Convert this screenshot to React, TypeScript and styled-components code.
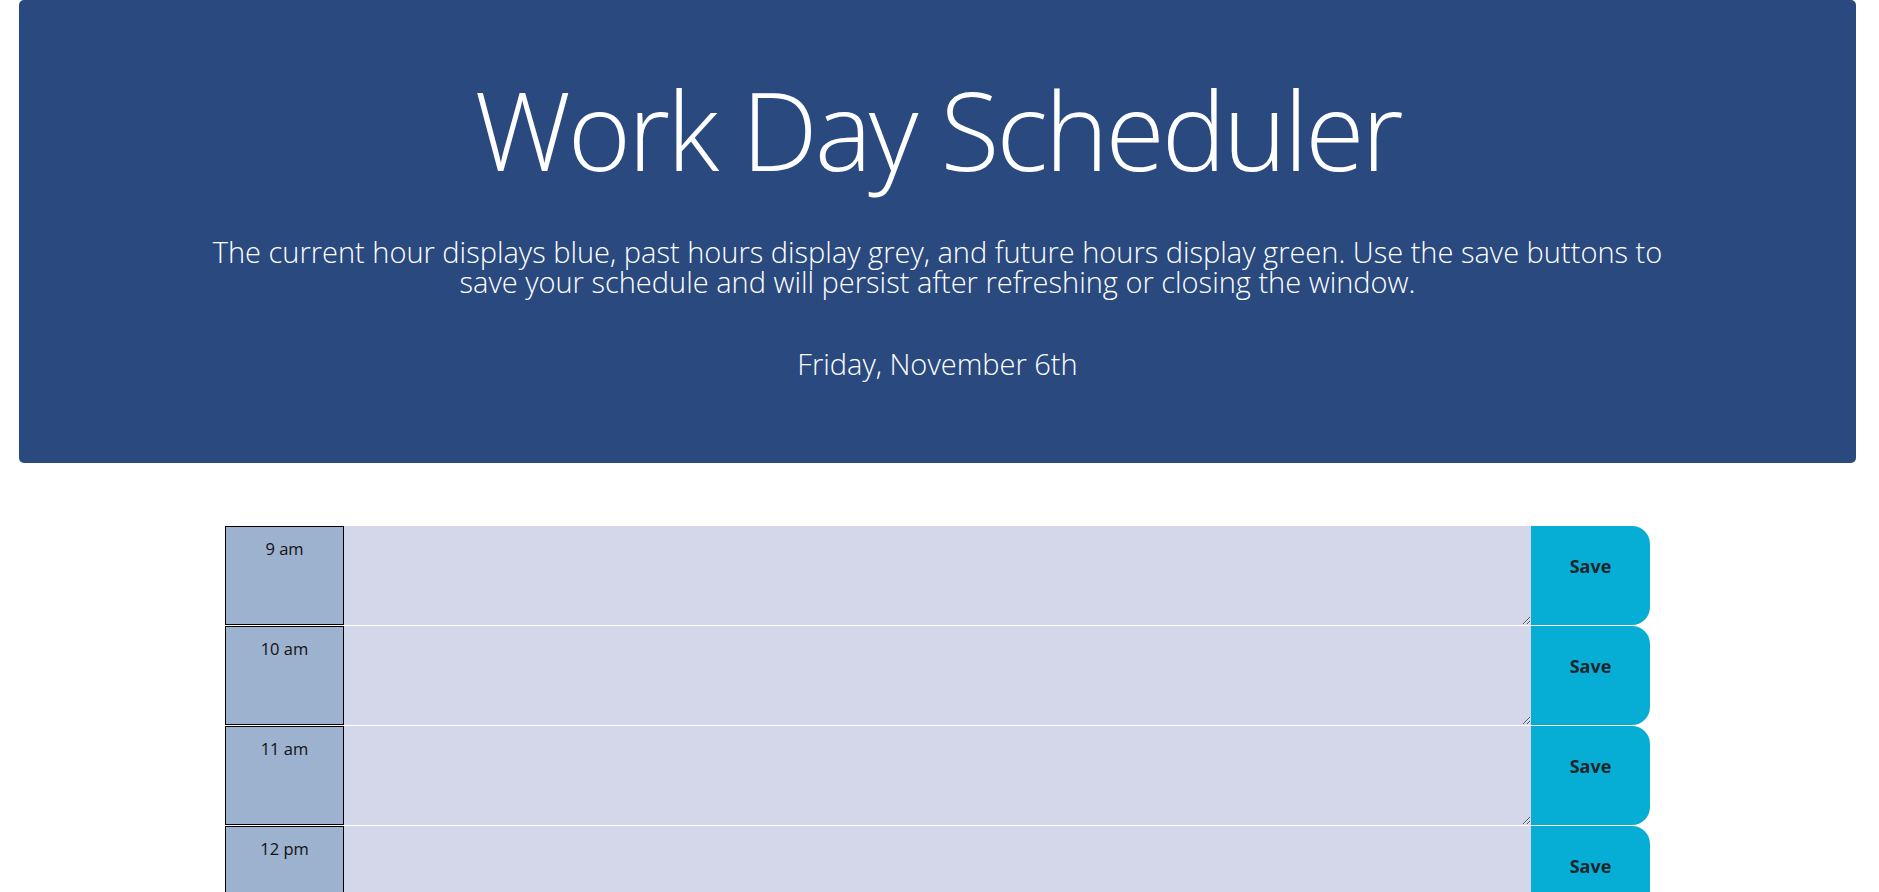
import React from "react";
import styled, { createGlobalStyle } from "styled-components";

const GlobalStyle = createGlobalStyle`
  html { scrollbar-width: none; }
  html::-webkit-scrollbar { display: none; }
  * { box-sizing: border-box; }
  body {
    margin: 0;
    background: #ffffff;
    color: #212529;
    font-family: "Open Sans", "Noto Sans", "Liberation Sans", sans-serif;
  }
`;

const Page = styled.div`
  padding: 0 23px 40px 19px;
`;

const Header = styled.header`
  display: flex;
  flex-direction: column;
  align-items: center;
  height: 463px;
  padding-top: 65px;
  background: #2a4a7f;
  color: #ffffff;
  border-radius: 5px;
  text-align: center;
`;

const Title = styled.h1`
  margin: 0;
  font-size: 108px;
  font-weight: 300;
  line-height: 130px;
  letter-spacing: -3px;
`;

const Lead = styled.p`
  margin: 42px 0 0;
  font-size: 29px;
  font-weight: 300;
  line-height: 30px;
  white-space: nowrap;
`;

const Today = styled.p`
  margin: 52px 0 0;
  font-size: 29px;
  font-weight: 300;
  line-height: 30px;
`;

const Schedule = styled.main`
  width: 1425px;
  margin: 63px auto 0;
`;

const Row = styled.div`
  display: flex;
  height: 100px;
  border-bottom: 1px solid #ffffff;
`;

const Hour = styled.div`
  flex: none;
  width: 119px;
  padding-top: 10px;
  background: #9db2cf;
  border: 1px solid #000000;
  color: #111111;
  font-size: 16.5px;
  line-height: 24px;
  text-align: center;
`;

const Entry = styled.textarea`
  flex: 1;
  margin: 0;
  padding: 10px;
  background: #d4d7e9;
  border: none;
  outline: none;
  font: inherit;
  color: #000000;
`;

const SaveButton = styled.button`
  flex: none;
  width: 119px;
  padding: 0 0 20px;
  background: #06aed5;
  border: none;
  border-radius: 0 18px 18px 0;
  color: #212529;
  font-family: "Open Sans", "Noto Sans", sans-serif;
  font-size: 18px;
  font-weight: 700;
  cursor: pointer;
`;

const hours = ["9 am", "10 am", "11 am", "12 pm", "1 pm", "2 pm", "3 pm", "4 pm", "5 pm"];

export default function App() {
  return (
    <>
      <GlobalStyle />
      <Page>
        <Header>
          <Title>Work Day Scheduler</Title>
          <Lead>
            The current hour displays blue, past hours display grey, and future hours display green. Use the save buttons to
            <br />
            save your schedule and will persist after refreshing or closing the window.
          </Lead>
          <Today>Friday, November 6th</Today>
        </Header>
        <Schedule>
          {hours.map((h) => (
            <Row key={h}>
              <Hour>{h}</Hour>
              <Entry />
              <SaveButton>Save</SaveButton>
            </Row>
          ))}
        </Schedule>
      </Page>
    </>
  );
}
